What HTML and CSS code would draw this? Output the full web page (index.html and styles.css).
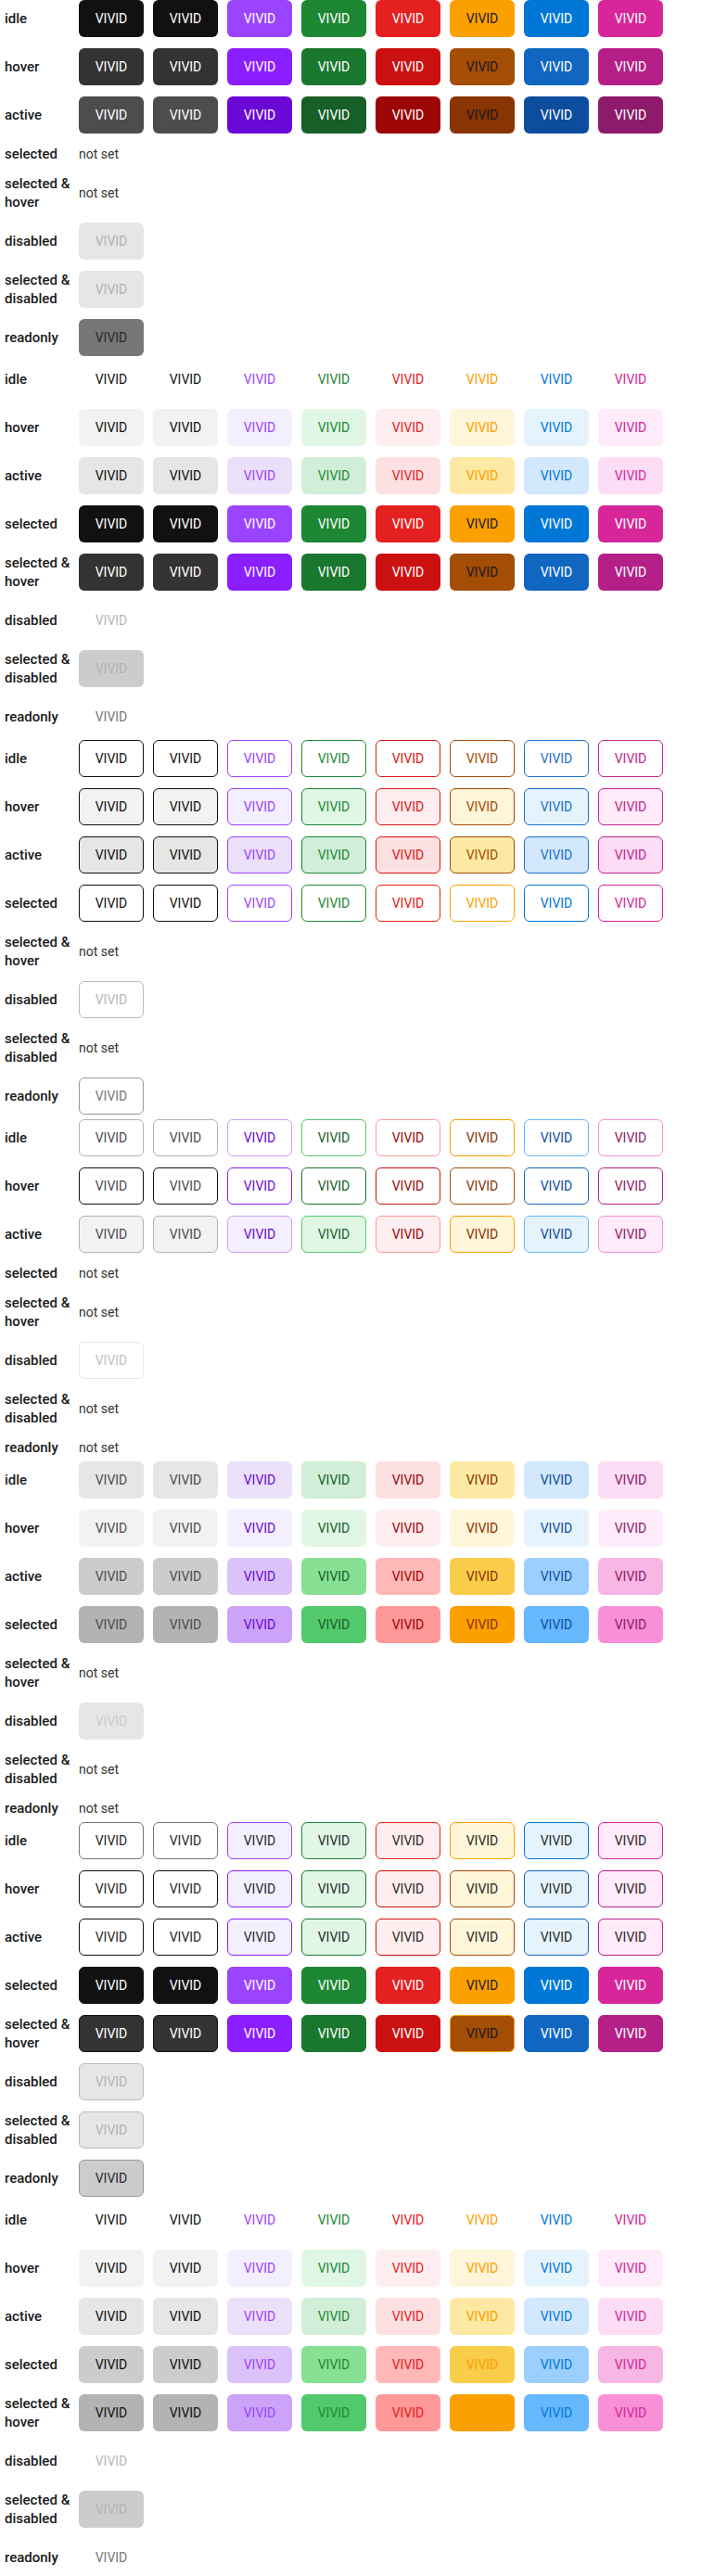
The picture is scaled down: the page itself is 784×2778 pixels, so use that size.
FILE: index.html
```html
<!DOCTYPE html>
<html lang="en">
<head>
<meta charset="utf-8">
<title>Button states</title>
<link rel="stylesheet" href="styles.css">
</head>
<body>
<main class="page">

<section class="section">
  <div class="row"><div class="label">idle</div><div class="btns s1-idle"><span class="btn k">VIVID</span><span class="btn k">VIVID</span><span class="btn p">VIVID</span><span class="btn g">VIVID</span><span class="btn r">VIVID</span><span class="btn o">VIVID</span><span class="btn b">VIVID</span><span class="btn m">VIVID</span></div></div>
  <div class="row"><div class="label">hover</div><div class="btns s1-hover"><span class="btn k">VIVID</span><span class="btn k">VIVID</span><span class="btn p">VIVID</span><span class="btn g">VIVID</span><span class="btn r">VIVID</span><span class="btn o">VIVID</span><span class="btn b">VIVID</span><span class="btn m">VIVID</span></div></div>
  <div class="row"><div class="label">active</div><div class="btns s1-active"><span class="btn k">VIVID</span><span class="btn k">VIVID</span><span class="btn p">VIVID</span><span class="btn g">VIVID</span><span class="btn r">VIVID</span><span class="btn o">VIVID</span><span class="btn b">VIVID</span><span class="btn m">VIVID</span></div></div>
  <div class="row"><div class="label">selected</div><span class="note">not set</span></div>
  <div class="row"><div class="label">selected &amp; hover</div><span class="note">not set</span></div>
  <div class="row"><div class="label">disabled</div><div class="btns s1-disabled"><span class="btn k">VIVID</span></div></div>
  <div class="row"><div class="label">selected &amp; disabled</div><div class="btns s1-disabled"><span class="btn k">VIVID</span></div></div>
  <div class="row"><div class="label">readonly</div><div class="btns s1-readonly"><span class="btn k">VIVID</span></div></div>
</section>

<section class="section">
  <div class="row"><div class="label">idle</div><div class="btns s2-idle"><span class="btn k">VIVID</span><span class="btn k">VIVID</span><span class="btn p">VIVID</span><span class="btn g">VIVID</span><span class="btn r">VIVID</span><span class="btn o">VIVID</span><span class="btn b">VIVID</span><span class="btn m">VIVID</span></div></div>
  <div class="row"><div class="label">hover</div><div class="btns s2-hover"><span class="btn k">VIVID</span><span class="btn k">VIVID</span><span class="btn p">VIVID</span><span class="btn g">VIVID</span><span class="btn r">VIVID</span><span class="btn o">VIVID</span><span class="btn b">VIVID</span><span class="btn m">VIVID</span></div></div>
  <div class="row"><div class="label">active</div><div class="btns s2-active"><span class="btn k">VIVID</span><span class="btn k">VIVID</span><span class="btn p">VIVID</span><span class="btn g">VIVID</span><span class="btn r">VIVID</span><span class="btn o">VIVID</span><span class="btn b">VIVID</span><span class="btn m">VIVID</span></div></div>
  <div class="row"><div class="label">selected</div><div class="btns s1-idle"><span class="btn k">VIVID</span><span class="btn k">VIVID</span><span class="btn p">VIVID</span><span class="btn g">VIVID</span><span class="btn r">VIVID</span><span class="btn o">VIVID</span><span class="btn b">VIVID</span><span class="btn m">VIVID</span></div></div>
  <div class="row"><div class="label">selected &amp; hover</div><div class="btns s1-hover"><span class="btn k">VIVID</span><span class="btn k">VIVID</span><span class="btn p">VIVID</span><span class="btn g">VIVID</span><span class="btn r">VIVID</span><span class="btn o">VIVID</span><span class="btn b">VIVID</span><span class="btn m">VIVID</span></div></div>
  <div class="row"><div class="label">disabled</div><div class="btns s2-disabled"><span class="btn k">VIVID</span></div></div>
  <div class="row"><div class="label">selected &amp; disabled</div><div class="btns s2-seldis"><span class="btn k">VIVID</span></div></div>
  <div class="row"><div class="label">readonly</div><div class="btns s2-readonly"><span class="btn k">VIVID</span></div></div>
</section>

<section class="section">
  <div class="row"><div class="label">idle</div><div class="btns s3-idle"><span class="btn k">VIVID</span><span class="btn k">VIVID</span><span class="btn p">VIVID</span><span class="btn g">VIVID</span><span class="btn r">VIVID</span><span class="btn o">VIVID</span><span class="btn b">VIVID</span><span class="btn m">VIVID</span></div></div>
  <div class="row"><div class="label">hover</div><div class="btns s3-hover"><span class="btn k">VIVID</span><span class="btn k">VIVID</span><span class="btn p">VIVID</span><span class="btn g">VIVID</span><span class="btn r">VIVID</span><span class="btn o">VIVID</span><span class="btn b">VIVID</span><span class="btn m">VIVID</span></div></div>
  <div class="row"><div class="label">active</div><div class="btns s3-active"><span class="btn k">VIVID</span><span class="btn k">VIVID</span><span class="btn p">VIVID</span><span class="btn g">VIVID</span><span class="btn r">VIVID</span><span class="btn o">VIVID</span><span class="btn b">VIVID</span><span class="btn m">VIVID</span></div></div>
  <div class="row"><div class="label">selected</div><div class="btns s3-selected"><span class="btn k">VIVID</span><span class="btn k">VIVID</span><span class="btn p">VIVID</span><span class="btn g">VIVID</span><span class="btn r">VIVID</span><span class="btn o">VIVID</span><span class="btn b">VIVID</span><span class="btn m">VIVID</span></div></div>
  <div class="row"><div class="label">selected &amp; hover</div><span class="note">not set</span></div>
  <div class="row"><div class="label">disabled</div><div class="btns s3-disabled"><span class="btn k">VIVID</span></div></div>
  <div class="row"><div class="label">selected &amp; disabled</div><span class="note">not set</span></div>
  <div class="row"><div class="label">readonly</div><div class="btns s3-readonly"><span class="btn k">VIVID</span></div></div>
</section>

<section class="section">
  <div class="row"><div class="label">idle</div><div class="btns s4-idle"><span class="btn k">VIVID</span><span class="btn k">VIVID</span><span class="btn p">VIVID</span><span class="btn g">VIVID</span><span class="btn r">VIVID</span><span class="btn o">VIVID</span><span class="btn b">VIVID</span><span class="btn m">VIVID</span></div></div>
  <div class="row"><div class="label">hover</div><div class="btns s4-hover"><span class="btn k">VIVID</span><span class="btn k">VIVID</span><span class="btn p">VIVID</span><span class="btn g">VIVID</span><span class="btn r">VIVID</span><span class="btn o">VIVID</span><span class="btn b">VIVID</span><span class="btn m">VIVID</span></div></div>
  <div class="row"><div class="label">active</div><div class="btns s4-active"><span class="btn k">VIVID</span><span class="btn k">VIVID</span><span class="btn p">VIVID</span><span class="btn g">VIVID</span><span class="btn r">VIVID</span><span class="btn o">VIVID</span><span class="btn b">VIVID</span><span class="btn m">VIVID</span></div></div>
  <div class="row"><div class="label">selected</div><span class="note">not set</span></div>
  <div class="row"><div class="label">selected &amp; hover</div><span class="note">not set</span></div>
  <div class="row"><div class="label">disabled</div><div class="btns s4-disabled"><span class="btn k">VIVID</span></div></div>
  <div class="row"><div class="label">selected &amp; disabled</div><span class="note">not set</span></div>
  <div class="row"><div class="label">readonly</div><span class="note">not set</span></div>
</section>

<section class="section">
  <div class="row"><div class="label">idle</div><div class="btns s5-idle"><span class="btn k">VIVID</span><span class="btn k">VIVID</span><span class="btn p">VIVID</span><span class="btn g">VIVID</span><span class="btn r">VIVID</span><span class="btn o">VIVID</span><span class="btn b">VIVID</span><span class="btn m">VIVID</span></div></div>
  <div class="row"><div class="label">hover</div><div class="btns s5-hover"><span class="btn k">VIVID</span><span class="btn k">VIVID</span><span class="btn p">VIVID</span><span class="btn g">VIVID</span><span class="btn r">VIVID</span><span class="btn o">VIVID</span><span class="btn b">VIVID</span><span class="btn m">VIVID</span></div></div>
  <div class="row"><div class="label">active</div><div class="btns s5-active"><span class="btn k">VIVID</span><span class="btn k">VIVID</span><span class="btn p">VIVID</span><span class="btn g">VIVID</span><span class="btn r">VIVID</span><span class="btn o">VIVID</span><span class="btn b">VIVID</span><span class="btn m">VIVID</span></div></div>
  <div class="row"><div class="label">selected</div><div class="btns s5-selected"><span class="btn k">VIVID</span><span class="btn k">VIVID</span><span class="btn p">VIVID</span><span class="btn g">VIVID</span><span class="btn r">VIVID</span><span class="btn o">VIVID</span><span class="btn b">VIVID</span><span class="btn m">VIVID</span></div></div>
  <div class="row"><div class="label">selected &amp; hover</div><span class="note">not set</span></div>
  <div class="row"><div class="label">disabled</div><div class="btns s5-disabled"><span class="btn k">VIVID</span></div></div>
  <div class="row"><div class="label">selected &amp; disabled</div><span class="note">not set</span></div>
  <div class="row"><div class="label">readonly</div><span class="note">not set</span></div>
</section>

<section class="section">
  <div class="row"><div class="label">idle</div><div class="btns s6-idle"><span class="btn k">VIVID</span><span class="btn k">VIVID</span><span class="btn p">VIVID</span><span class="btn g">VIVID</span><span class="btn r">VIVID</span><span class="btn o">VIVID</span><span class="btn b">VIVID</span><span class="btn m">VIVID</span></div></div>
  <div class="row"><div class="label">hover</div><div class="btns s6-hover"><span class="btn k">VIVID</span><span class="btn k">VIVID</span><span class="btn p">VIVID</span><span class="btn g">VIVID</span><span class="btn r">VIVID</span><span class="btn o">VIVID</span><span class="btn b">VIVID</span><span class="btn m">VIVID</span></div></div>
  <div class="row"><div class="label">active</div><div class="btns s6-hover"><span class="btn k">VIVID</span><span class="btn k">VIVID</span><span class="btn p">VIVID</span><span class="btn g">VIVID</span><span class="btn r">VIVID</span><span class="btn o">VIVID</span><span class="btn b">VIVID</span><span class="btn m">VIVID</span></div></div>
  <div class="row"><div class="label">selected</div><div class="btns s6-selected"><span class="btn k">VIVID</span><span class="btn k">VIVID</span><span class="btn p">VIVID</span><span class="btn g">VIVID</span><span class="btn r">VIVID</span><span class="btn o">VIVID</span><span class="btn b">VIVID</span><span class="btn m">VIVID</span></div></div>
  <div class="row"><div class="label">selected &amp; hover</div><div class="btns s6-selhover"><span class="btn k">VIVID</span><span class="btn k">VIVID</span><span class="btn p">VIVID</span><span class="btn g">VIVID</span><span class="btn r">VIVID</span><span class="btn o">VIVID</span><span class="btn b">VIVID</span><span class="btn m">VIVID</span></div></div>
  <div class="row"><div class="label">disabled</div><div class="btns s6-disabled"><span class="btn k">VIVID</span></div></div>
  <div class="row"><div class="label">selected &amp; disabled</div><div class="btns s6-disabled"><span class="btn k">VIVID</span></div></div>
  <div class="row"><div class="label">readonly</div><div class="btns s6-readonly"><span class="btn k">VIVID</span></div></div>
</section>

<section class="section">
  <div class="row"><div class="label">idle</div><div class="btns s7-idle"><span class="btn k">VIVID</span><span class="btn k">VIVID</span><span class="btn p">VIVID</span><span class="btn g">VIVID</span><span class="btn r">VIVID</span><span class="btn o">VIVID</span><span class="btn b">VIVID</span><span class="btn m">VIVID</span></div></div>
  <div class="row"><div class="label">hover</div><div class="btns s7-hover"><span class="btn k">VIVID</span><span class="btn k">VIVID</span><span class="btn p">VIVID</span><span class="btn g">VIVID</span><span class="btn r">VIVID</span><span class="btn o">VIVID</span><span class="btn b">VIVID</span><span class="btn m">VIVID</span></div></div>
  <div class="row"><div class="label">active</div><div class="btns s7-active"><span class="btn k">VIVID</span><span class="btn k">VIVID</span><span class="btn p">VIVID</span><span class="btn g">VIVID</span><span class="btn r">VIVID</span><span class="btn o">VIVID</span><span class="btn b">VIVID</span><span class="btn m">VIVID</span></div></div>
  <div class="row"><div class="label">selected</div><div class="btns s7-selected"><span class="btn k">VIVID</span><span class="btn k">VIVID</span><span class="btn p">VIVID</span><span class="btn g">VIVID</span><span class="btn r">VIVID</span><span class="btn o">VIVID</span><span class="btn b">VIVID</span><span class="btn m">VIVID</span></div></div>
  <div class="row"><div class="label">selected &amp; hover</div><div class="btns s7-selhover"><span class="btn k">VIVID</span><span class="btn k">VIVID</span><span class="btn p">VIVID</span><span class="btn g">VIVID</span><span class="btn r">VIVID</span><span class="btn o">VIVID</span><span class="btn b">VIVID</span><span class="btn m">VIVID</span></div></div>
  <div class="row"><div class="label">disabled</div><div class="btns s2-disabled"><span class="btn k">VIVID</span></div></div>
  <div class="row"><div class="label">selected &amp; disabled</div><div class="btns s2-seldis"><span class="btn k">VIVID</span></div></div>
  <div class="row"><div class="label">readonly</div><div class="btns s2-readonly"><span class="btn k">VIVID</span></div></div>
</section>

</main>
</body>
</html>
```

FILE: styles.css
```css
* { box-sizing: border-box; }

body {
  margin: 0;
  padding: 0 5px;
  background: #ffffff;
  color: #1a1a1a;
  font-family: Roboto, "Liberation Sans", Arial, sans-serif;
}

.page { display: flex; flex-direction: column; gap: 5px; }
.section { display: flex; flex-direction: column; gap: 12px; }
.row { display: flex; align-items: center; min-height: 20px; }

.label {
  width: 80px;
  flex: none;
  font-size: 15px;
  font-weight: 500;
  line-height: 20px;
  color: #1a1a1a;
}

.note { font-size: 14px; line-height: 20px; color: #333333; }

.btns { display: flex; gap: 10px; }

.btn {
  width: 70px;
  height: 40px;
  flex: none;
  display: flex;
  align-items: center;
  justify-content: center;
  border: 1px solid transparent;
  border-radius: 6px;
  font-size: 14px;
  font-weight: 400;
  line-height: 1;
}

/* colour tokens */
.k { --base:#111111; --hover:#333333; --active:#4d4d4d; --t1:#f2f2f2; --t2:#e6e6e6; --s3:#cccccc; --s4:#b3b3b3; --on:#ffffff; --safe:#111111; --light:#b3b3b3; --wash:#ffffff; --mid:#777777; --strong:#111111; }
.p { --base:#9b44ff; --hover:#8a1eff; --active:#6a08d6; --t1:#f3efff; --t2:#ebe0fa; --s3:#dcc2fb; --s4:#cca3f8; --on:#ffffff; --safe:#9b44ff; --light:#cca3f8; --wash:#f3efff; --mid:#9b44ff; --strong:#8a1eff; }
.g { --base:#1e8734; --hover:#1a772e; --active:#175e27; --t1:#e0f7e5; --t2:#d1eed8; --s3:#88e094; --s4:#52c96b; --on:#ffffff; --safe:#1e8734; --light:#52c96b; --wash:#e0f7e5; --mid:#1e8734; --strong:#1a772e; }
.r { --base:#e52020; --hover:#cc1111; --active:#9c0505; --t1:#ffeef0; --t2:#fde0e2; --s3:#ffb8b8; --s4:#ff9999; --on:#ffffff; --safe:#dd1515; --light:#ff9999; --wash:#ffeef0; --mid:#e52020; --strong:#cc1111; }
.o { --base:#fca000; --hover:#a34d05; --active:#883403; --t1:#fff5d9; --t2:#fde9a3; --s3:#f9cc4a; --s4:#fca000; --on:#1a1a1a; --safe:#a34d05; --light:#fca000; --wash:#fff5d9; --mid:#fca000; --strong:#a34d05; }
.b { --base:#0077d6; --hover:#1166c2; --active:#0c4d9e; --t1:#e5f3fc; --t2:#d3e8fc; --s3:#9ccffe; --s4:#66b8ff; --on:#ffffff; --safe:#1a70cc; --light:#66b8ff; --wash:#e5f3fc; --mid:#0077d6; --strong:#1166c2; }
.m { --base:#d62699; --hover:#b51f88; --active:#8d1a6a; --t1:#ffebfa; --t2:#fddcf6; --s3:#f7b7e4; --s4:#f990d7; --on:#ffffff; --safe:#c4268f; --light:#f990d7; --wash:#ffebfa; --mid:#d62699; --strong:#b51f88; }

/* section 1: solid */
.s1-idle .btn { background: var(--base); color: var(--on); }
.s1-hover .btn { background: var(--hover); color: var(--on); }
.s1-active .btn { background: var(--active); color: var(--on); }
.s1-disabled .btn { background: #e6e6e6; color: #b3b3b3; }
.s1-readonly .btn { background: #777777; color: #2a2a2a; }

/* section 2: ghost */
.s2-idle .btn { color: var(--base); }
.s2-hover .btn { background: var(--t1); color: var(--base); }
.s2-active .btn { background: var(--t2); color: var(--base); }
.s2-disabled .btn { color: #b8b8b8; }
.s2-seldis .btn { background: #cccccc; color: #b3b3b3; }
.s2-readonly .btn { color: #777777; }

/* section 3: outline */
.s3-idle .btn { background: #ffffff; border-color: var(--safe); color: var(--safe); }
.s3-hover .btn { background: var(--t1); border-color: var(--safe); color: var(--safe); }
.s3-active .btn { background: var(--t2); border-color: var(--safe); color: var(--safe); }
.s3-selected .btn { background: #ffffff; border-color: var(--base); color: var(--base); }
.s3-disabled .btn { border-color: #bbbbbb; color: #b8b8b8; }
.s3-readonly .btn { border-color: #999999; color: #777777; }

/* section 4: light outline */
.s4-idle .btn { background: #ffffff; border-color: var(--light); color: var(--active); }
.s4-hover .btn { background: #ffffff; border-color: var(--strong); color: var(--active); }
.s4-active .btn { background: var(--t1); border-color: var(--light); color: var(--active); }
.s4-disabled .btn { border-color: #e6e6e6; color: #c2c2c2; }

/* section 5: soft */
.s5-idle .btn { background: var(--t2); color: var(--active); }
.s5-hover .btn { background: var(--t1); color: var(--active); }
.s5-active .btn { background: var(--s3); color: var(--active); }
.s5-selected .btn { background: var(--s4); color: var(--active); }
.s5-disabled .btn { background: #e6e6e6; color: #cccccc; }

/* section 6: tinted outline */
.s6-idle .btn { background: var(--wash); border-color: var(--mid); color: #2a2a2a; }
.s6-hover .btn { background: var(--wash); border-color: var(--strong); color: #2a2a2a; }
.s6-selected .btn { background: var(--base); border-color: var(--base); color: var(--on); }
.s6-selhover .btn { background: var(--hover); border-color: var(--strong); color: var(--on); }
.s6-selhover .o { border-color: #fca000; }
.s6-disabled .btn { background: #e6e6e6; border-color: #bbbbbb; color: #b3b3b3; }
.s6-readonly .btn { background: #cccccc; border-color: #999999; color: #2a2a2a; }

/* section 7: text to soft */
.s7-idle .btn { color: var(--base); }
.s7-hover .btn { background: var(--t1); color: var(--base); }
.s7-active .btn { background: var(--t2); color: var(--base); }
.s7-selected .btn { background: var(--s3); color: var(--base); }
.s7-selhover .btn { background: var(--s4); color: var(--base); }
```
